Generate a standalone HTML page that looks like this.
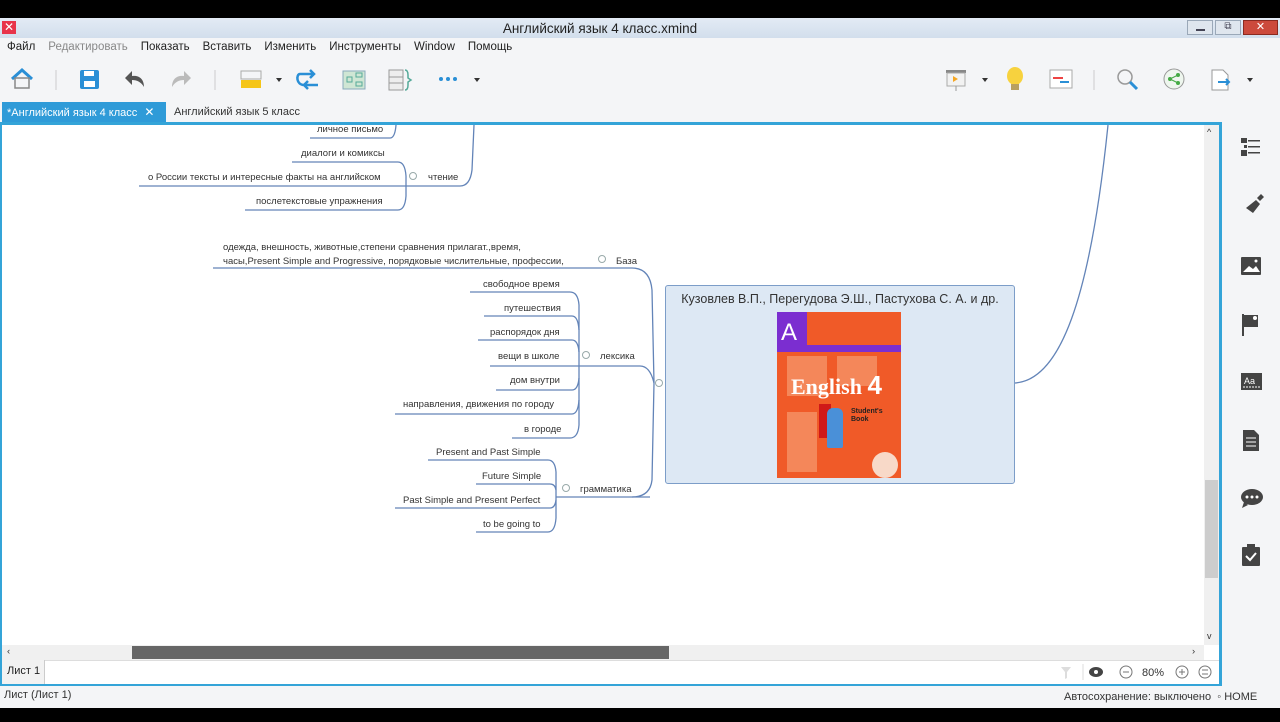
<!DOCTYPE html>
<html><head><meta charset="utf-8"><style>
*{margin:0;padding:0;box-sizing:border-box}
body{width:1280px;height:720px;overflow:hidden;background:#000;font-family:"Liberation Sans","DejaVu Sans",sans-serif;position:relative}
.a{position:absolute}
.t{position:absolute;font-size:9.5px;color:#333;white-space:nowrap;line-height:12px}
.m{position:absolute;left:0;top:2px;width:1280px;height:720px}
.menu span{margin-right:13px}
</style></head><body>
<div class="a" style="left:0;top:18px;width:1280px;height:20px;background:linear-gradient(#e3ebf5,#d2deec)"></div>
<div class="a" style="left:2px;top:21px;width:14px;height:13px;background:#e8344a;color:#fff;font-size:12px;line-height:13px;text-align:center;font-weight:bold">✕</div>
<div class="a" style="left:0;width:1200px;top:21px;text-align:center;font-size:13.5px;color:#222">Английский язык 4 класс.xmind</div>
<div class="a" style="left:1187px;top:20px;width:26px;height:15px;background:#dfe6ee;border:1px solid #9aa8b8"><div class="a" style="left:8px;top:8px;width:9px;height:2px;background:#445"></div></div>
<div class="a" style="left:1215px;top:20px;width:26px;height:15px;background:#dfe6ee;border:1px solid #9aa8b8;font-size:10px;text-align:center;color:#445">⧉</div>
<div class="a" style="left:1243px;top:20px;width:35px;height:15px;background:#cc4a3c;border:1px solid #8a2a20;color:#fff;font-size:11px;text-align:center;line-height:13px;font-weight:bold">✕</div>
<div class="a menu" style="left:0;top:38px;width:1280px;height:20px;background:#f4f5f7;font-size:11.5px;color:#222;padding:3px 0 0 7px"><span>Файл</span><span style="color:#888">Редактировать</span><span>Показать</span><span>Вставить</span><span>Изменить</span><span>Инструменты</span><span>Window</span><span>Помощь</span></div>
<div class="a" style="left:0;top:58px;width:1280px;height:44px;background:#f4f5f7"></div>
<svg class="a" style="left:0;top:58px" width="1280" height="44">
<path d="M12 21 L22 12 L32 21" fill="none" stroke="#2a8fd6" stroke-width="3"/><rect x="15" y="20" width="14" height="10" fill="none" stroke="#888" stroke-width="1.5"/>
<line x1="56" y1="12" x2="56" y2="32" stroke="#ccc"/>
<rect x="80" y="12" width="19" height="19" rx="2" fill="#2a8fd6"/><rect x="84" y="13" width="10" height="5" fill="#fff"/><rect x="84" y="23" width="11" height="6" fill="#fff"/>
<path d="M144 29 C144 20 138 17 132 18 L132 13 L125 20 L132 27 L132 22 C137 22 141 24 144 29Z" fill="#555"/>
<path d="M172 29 C172 20 178 17 184 18 L184 13 L191 20 L184 27 L184 22 C179 22 175 24 172 29Z" fill="#bbb"/>
<line x1="215" y1="12" x2="215" y2="32" stroke="#ccc"/>
<rect x="241" y="13" width="20" height="8" fill="none" stroke="#aaa"/><rect x="241" y="22" width="20" height="8" fill="#f5c518"/>
<path d="M276 20 l6 0 l-3 4z" fill="#333"/>
<path d="M300 16 H314 M310 12 L314 16 L310 20 M318 27 H304 M308 23 L304 27 L308 31 M300 16 C296 16 296 27 304 27" fill="none" stroke="#2a8fd6" stroke-width="2.5"/>
<rect x="343" y="13" width="22" height="18" fill="#cfe6d4" stroke="#8ab" /><rect x="347" y="19" width="5" height="5" fill="none" stroke="#5a9"/><rect x="356" y="15" width="6" height="4" fill="none" stroke="#5a9"/><rect x="356" y="24" width="6" height="4" fill="none" stroke="#5a9"/>
<rect x="389" y="12" width="14" height="20" fill="#eee" stroke="#999"/><line x1="389" y1="19" x2="403" y2="19" stroke="#999"/><line x1="389" y1="25" x2="403" y2="25" stroke="#999"/><path d="M405 12 q3 0 3 5 v3 l3 2 l-3 2 v3 q0 5 -3 5" fill="none" stroke="#5a9" stroke-width="1.5"/>
<circle cx="441" cy="21" r="2" fill="#2a8fd6"/><circle cx="448" cy="21" r="2" fill="#2a8fd6"/><circle cx="455" cy="21" r="2" fill="#2a8fd6"/>
<path d="M474 20 l6 0 l-3 4z" fill="#333"/>
<rect x="946" y="12" width="20" height="3" fill="#888"/><rect x="947" y="15" width="18" height="13" fill="#f2f2f2" stroke="#aaa"/><path d="M953 18 l5 3 l-5 3z" fill="#f5a623"/><line x1="956" y1="28" x2="956" y2="33" stroke="#999"/>
<path d="M982 20 l6 0 l-3 4z" fill="#333"/>
<ellipse cx="1015" cy="18" rx="8" ry="9" fill="#f7d23e"/><rect x="1011" y="26" width="8" height="6" fill="#b8a060"/>
<rect x="1050" y="12" width="22" height="18" fill="#fff" stroke="#aaa"/><line x1="1053" y1="20" x2="1063" y2="20" stroke="#e44" stroke-width="2"/><line x1="1060" y1="24" x2="1069" y2="24" stroke="#2a8fd6" stroke-width="2"/>
<line x1="1094" y1="12" x2="1094" y2="32" stroke="#ccc"/>
<circle cx="1125" cy="19" r="7" fill="none" stroke="#999" stroke-width="1.5"/><line x1="1130" y1="24" x2="1137" y2="31" stroke="#2a8fd6" stroke-width="3"/>
<circle cx="1174" cy="21" r="10" fill="#eef6ee" stroke="#999"/><circle cx="1170" cy="21" r="2" fill="#4a4"/><circle cx="1178" cy="17" r="2" fill="#4a4"/><circle cx="1178" cy="25" r="2" fill="#4a4"/><path d="M1170 21 L1178 17 M1170 21 L1178 25" stroke="#4a4"/>
<path d="M1212 12 h11 l5 5 v15 h-16z" fill="#fff" stroke="#999"/><path d="M1218 24 h11 M1226 21 l3 3 l-3 3" fill="none" stroke="#2a8fd6" stroke-width="2"/>
<path d="M1247 20 l6 0 l-3 4z" fill="#333"/>
</svg>
<div class="a" style="left:0;top:102px;width:1280px;height:21px;background:#f4f5f7"></div>
<div class="a" style="left:2px;top:102px;width:164px;height:21px;background:#2f9bd8;color:#fff;font-size:11px;line-height:20px;padding-left:5px">*Английский язык 4 класс <span style="margin-left:4px;font-size:12px">✕</span></div>
<div class="a" style="left:174px;top:102px;font-size:11px;line-height:20px;color:#333">Английский язык 5 класс</div>
<div class="a" style="left:0;top:122px;width:1222px;height:564px;border:3px solid #34a4d8;border-left-width:2px;background:#fff"></div>
<div class="a" style="left:1204px;top:125px;width:15px;height:520px;background:#f0f0f0"></div>
<div class="a" style="left:1205px;top:480px;width:13px;height:98px;background:#cdcdcd"></div>
<div class="t" style="left:1207px;top:126px;font-size:9px">^</div>
<div class="t" style="left:1207px;top:630px;font-size:9px">v</div>
<div class="a" style="left:2px;top:645px;width:1202px;height:15px;background:#f0f0f0"></div>
<div class="a" style="left:132px;top:646px;width:537px;height:13px;background:#666"></div>
<div class="t" style="left:7px;top:646px">‹</div><div class="t" style="left:1192px;top:646px">›</div>
<div class="a" style="left:2px;top:660px;width:1217px;height:24px;background:#fff;border-top:1px solid #ddd"></div>
<div class="a" style="left:2px;top:660px;width:43px;height:24px;background:#f2f2f2;border-right:1px solid #ccc;font-size:11px;line-height:22px;padding-left:5px;color:#222">Лист 1</div>
<svg class="a" style="left:1055px;top:662px" width="165" height="20">
<path d="M6 5 h10 l-4 5 v6 l-2 1 v-7z" fill="#ddd"/><line x1="28" y1="2" x2="28" y2="18" stroke="#ddd"/>
<ellipse cx="41" cy="10" rx="7" ry="5" fill="#444"/><circle cx="41" cy="10" r="2" fill="#fff"/>
<circle cx="71" cy="10" r="6" fill="none" stroke="#777"/><line x1="68" y1="10" x2="74" y2="10" stroke="#777"/>
<text x="87" y="14" font-size="11" fill="#333" font-family="Liberation Sans">80%</text>
<circle cx="127" cy="10" r="6" fill="none" stroke="#777"/><path d="M124 10h6M127 7v6" stroke="#777"/>
<circle cx="150" cy="10" r="6" fill="none" stroke="#777"/><path d="M147 8h6M147 12h6" stroke="#777"/>
</svg>
<div class="a" style="left:0;top:686px;width:1280px;height:22px;background:#f4f5f7"></div>
<div class="t" style="left:4px;top:689px;font-size:11px">Лист (Лист 1)</div>
<div class="t" style="left:1064px;top:691px;font-size:11px">Автосохранение: выключено &nbsp;◦ HOME</div>
<div class="a" style="left:1222px;top:122px;width:58px;height:564px;background:#f4f5f7"></div>
<svg class="a" style="left:1230px;top:130px" width="44" height="440" fill="#444">
<rect x="11" y="8" width="6" height="5"/><rect x="18" y="10" width="12" height="1.5"/><rect x="14" y="15" width="3" height="3"/><rect x="18" y="16" width="12" height="1.5"/><rect x="11" y="20" width="6" height="6"/><rect x="18" y="22" width="12" height="1.5"/>
<path d="M27 68 l4 -4 l3 3 l-4 4z M26 70 l4 4 l-7 9 l-7 -5z"/>
<rect x="11" y="127" width="20" height="18" rx="1"/><path d="M13 142 l6 -6 l4 3 l3 -3 l4 6z" fill="#fff"/><circle cx="26" cy="131" r="1.5" fill="#fff"/>
<rect x="12" y="184" width="2" height="22"/><path d="M14 185 h14 v12 h-14z"/><circle cx="25" cy="188" r="2" fill="#fff"/>
<rect x="11" y="243" width="21" height="17"/><text x="14" y="254" font-size="9" fill="#fff" font-family="Liberation Sans">Aa</text><path d="M13 257 h17" stroke="#fff" stroke-dasharray="2 1"/>
<path d="M13 300 h11 l5 5 v16 h-16z"/><path d="M16 308h10M16 312h10M16 316h10" stroke="#fff"/>
<ellipse cx="22" cy="367" rx="11" ry="8"/><path d="M14 372 l-2 6 l6 -3z"/><circle cx="17" cy="367" r="1.5" fill="#fff"/><circle cx="22" cy="367" r="1.5" fill="#fff"/><circle cx="27" cy="367" r="1.5" fill="#fff"/>
<rect x="12" y="417" width="18" height="19" rx="1"/><rect x="17" y="414" width="8" height="4"/><path d="M16 426 l4 4 l6 -7" fill="none" stroke="#fff" stroke-width="2"/>
</svg>
<svg class="a" style="left:0;top:0" width="1280" height="720">
<g fill="none" stroke="#6384b8" stroke-width="1.3">
<path d="M1015 383 C1060 380 1090 300 1108 125"/>
<path d="M310 138 H390 Q395 138 396 125"/>
<path d="M292 162 H398 Q405 162 406 176 Q405 162 398 162"/>
<path d="M139 186 H460 Q470 186 472 170 L474 125"/>
<path d="M245 210 H398 Q405 210 406 196 V176"/>
<path d="M213 268 H632 Q650 268 652 290 L654 383 L652 480 Q650 497 632 497"/>
<path d="M592 366 H640 Q650 366 654 383"/>
<path d="M575 497 H650"/>
<path d="M470 292 H570 Q578 292 579 305 V425 Q578 438 570 438 H512"/>
<path d="M484 316 H572 Q578 316 579 330"/>
<path d="M478 340 H572 Q578 340 579 352"/>
<path d="M490 366 H592"/>
<path d="M496 390 H572 Q578 390 579 378"/>
<path d="M395 414 H572 Q578 414 579 400"/>
<path d="M428 460 H548 Q555 460 556 472 V518 Q555 532 548 532 H476"/>
<path d="M476 484 H550 Q555 484 556 490"/>
<path d="M395 508 H550 Q555 508 556 500"/>
<path d="M556 497 H575"/>
</g>
<g fill="#fff" stroke="#9aa" stroke-width="1"><circle cx="413" cy="176" r="3.5"/><circle cx="602" cy="259" r="3.5"/><circle cx="586" cy="355" r="3.5"/><circle cx="566" cy="488" r="3.5"/><circle cx="659" cy="383" r="3.5"/></g>
</svg>
<div class="m">
<div class="t" style="left:317px;top:122px">личное письмо</div>
<div class="t" style="left:301px;top:146px">диалоги и комиксы</div>
<div class="t" style="left:148px;top:170px">о России тексты и интересные факты на английском</div>
<div class="t" style="left:256px;top:194px">послетекстовые упражнения</div>
<div class="t" style="left:428px;top:170px">чтение</div>
<div class="t" style="left:223px;top:239px;line-height:14px">одежда, внешность, животные,степени сравнения прилагат.,время,<br>часы,Present Simple and Progressive, порядковые числительные, профессии,</div>
<div class="t" style="left:616px;top:254px">База</div>
<div class="t" style="left:483px;top:277px">свободное время</div>
<div class="t" style="left:504px;top:301px">путешествия</div>
<div class="t" style="left:490px;top:325px">распорядок дня</div>
<div class="t" style="left:498px;top:349px">вещи в школе</div>
<div class="t" style="left:510px;top:373px">дом внутри</div>
<div class="t" style="left:403px;top:397px">направления, движения по городу</div>
<div class="t" style="left:524px;top:422px">в городе</div>
<div class="t" style="left:600px;top:349px">лексика</div>
<div class="t" style="left:436px;top:445px">Present and Past Simple</div>
<div class="t" style="left:482px;top:469px">Future Simple</div>
<div class="t" style="left:403px;top:493px">Past Simple and Present Perfect</div>
<div class="t" style="left:483px;top:517px">to be going to</div>
<div class="t" style="left:580px;top:482px">грамматика</div>
</div>
<div class="a" style="left:665px;top:285px;width:350px;height:199px;background:#dde8f4;border:1.5px solid #7c9dc8;border-radius:3px"></div>
<div class="t" style="left:665px;width:350px;text-align:center;top:292px;font-size:12.5px;line-height:15px">Кузовлев В.П., Перегудова Э.Ш., Пастухова С. А. и др.</div>
<div class="a" style="left:777px;top:312px;width:124px;height:166px;background:#f05a28;overflow:hidden">
<div class="a" style="left:0;top:0;width:30px;height:35px;background:#7b2ed0"></div>
<div class="a" style="left:0;top:33px;width:124px;height:7px;background:#7b2ed0"></div>
<div class="a" style="left:4px;top:8px;color:#fff;font-size:24px;line-height:26px">A</div>
<div class="a" style="left:10px;top:44px;width:40px;height:40px;background:#f4875a"></div>
<div class="a" style="left:60px;top:44px;width:40px;height:30px;background:#f4875a"></div>
<div class="a" style="left:10px;top:100px;width:30px;height:60px;background:#f4875a"></div>
<div class="a" style="left:14px;top:58px;color:#fff;font-family:'Liberation Serif',serif;font-weight:bold;font-size:22px;line-height:30px">English <span style="font-family:'Liberation Sans';font-size:26px">4</span></div>
<div class="a" style="left:42px;top:92px;width:12px;height:34px;background:#d01818"></div>
<div class="a" style="left:50px;top:96px;width:16px;height:40px;background:#4a90d8;border-radius:6px 6px 2px 2px"></div>
<div class="a" style="left:74px;top:96px;color:#222;font-size:7px;line-height:8px;font-weight:bold">Student's<br>Book</div>
<div class="a" style="left:95px;top:140px;width:26px;height:26px;border-radius:50%;background:#f8d9c8"></div>
</div>
</body></html>
